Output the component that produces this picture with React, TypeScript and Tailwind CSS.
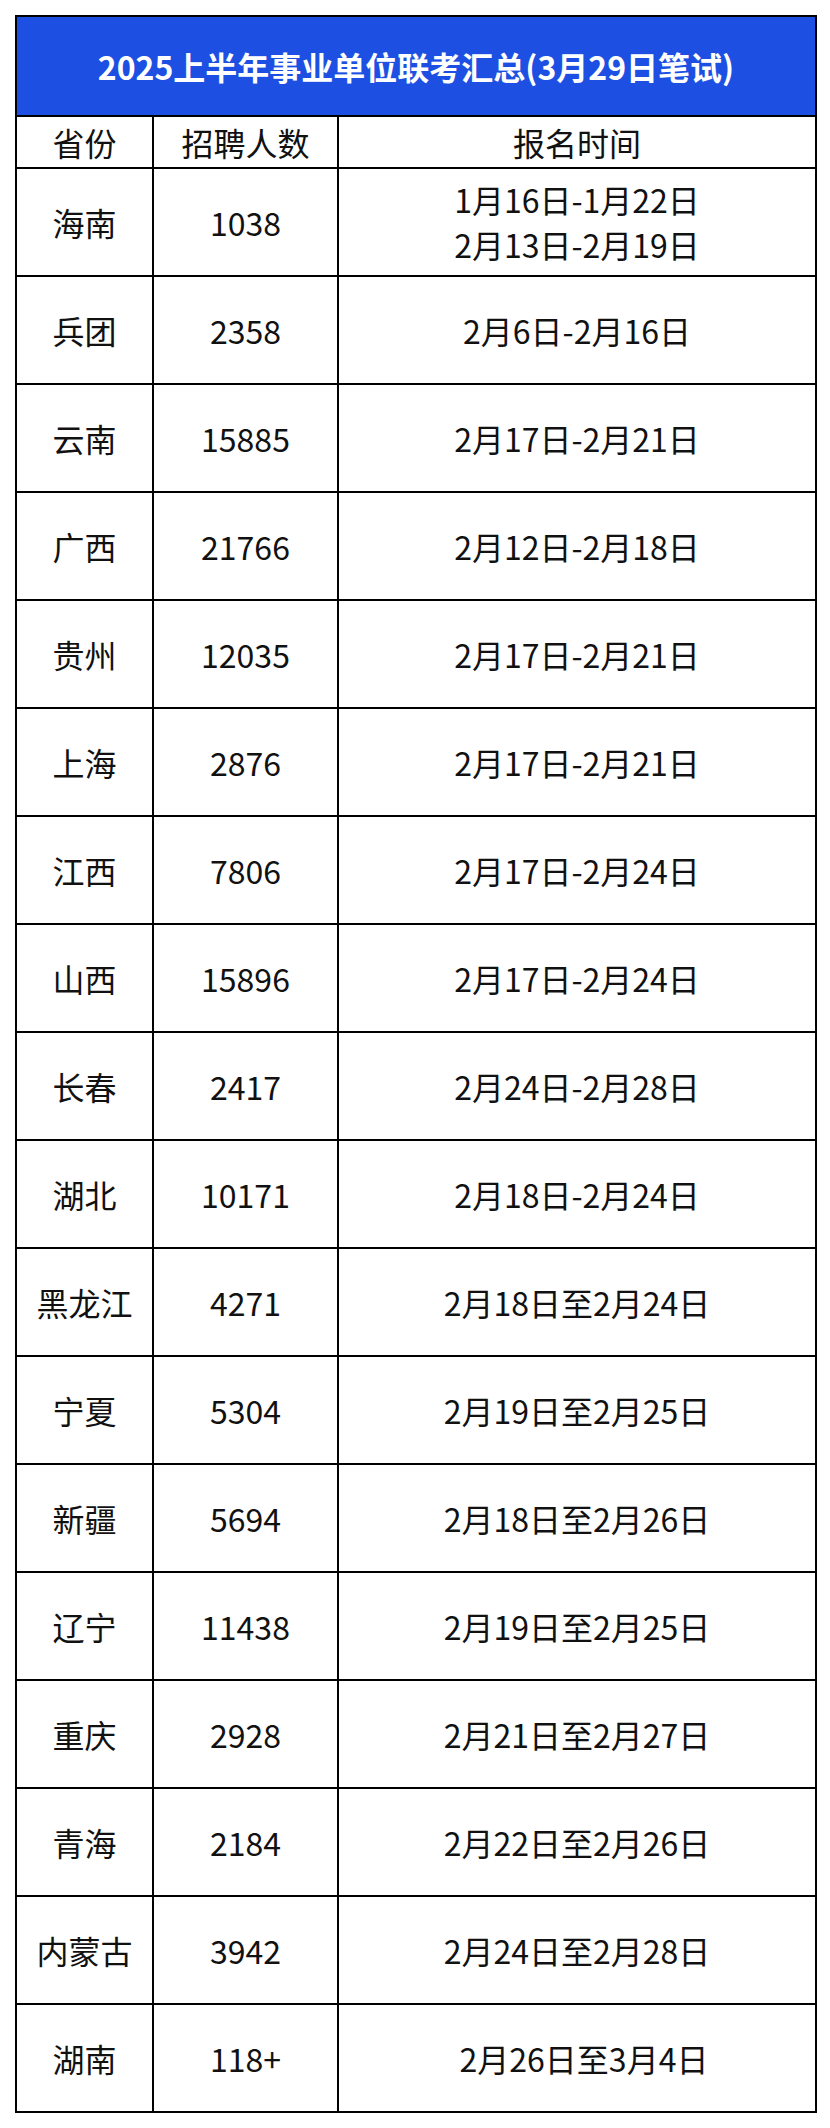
import React from "react";

const rows: { p: string; n: string; t: string[]; shift?: boolean }[] = [
  { p: "海南", n: "1038", t: ["1月16日-1月22日", "2月13日-2月19日"] },
  { p: "兵团", n: "2358", t: ["2月6日-2月16日"] },
  { p: "云南", n: "15885", t: ["2月17日-2月21日"] },
  { p: "广西", n: "21766", t: ["2月12日-2月18日"] },
  { p: "贵州", n: "12035", t: ["2月17日-2月21日"] },
  { p: "上海", n: "2876", t: ["2月17日-2月21日"] },
  { p: "江西", n: "7806", t: ["2月17日-2月24日"] },
  { p: "山西", n: "15896", t: ["2月17日-2月24日"] },
  { p: "长春", n: "2417", t: ["2月24日-2月28日"] },
  { p: "湖北", n: "10171", t: ["2月18日-2月24日"] },
  { p: "黑龙江", n: "4271", t: ["2月18日至2月24日"] },
  { p: "宁夏", n: "5304", t: ["2月19日至2月25日"] },
  { p: "新疆", n: "5694", t: ["2月18日至2月26日"] },
  { p: "辽宁", n: "11438", t: ["2月19日至2月25日"] },
  { p: "重庆", n: "2928", t: ["2月21日至2月27日"] },
  { p: "青海", n: "2184", t: ["2月22日至2月26日"] },
  { p: "内蒙古", n: "3942", t: ["2月24日至2月28日"] },
  { p: "湖南", n: "118+", t: ["2月26日至3月4日"], shift: true },
];

export default function App() {
  return (
    <div
      className="min-h-[2128px] w-[830px] bg-white pt-[15px] text-[#111]"
      style={{ fontFamily: '"Noto Sans CJK SC", "Noto Sans", sans-serif' }}
    >
      <div className="ml-[15px] w-[802px] border-2 border-black">
        <div className="flex h-[98px] items-center justify-center bg-[#1d50e2] text-[32px] font-bold text-white">
          2025上半年事业单位联考汇总(3月29日笔试)
        </div>
        <div className="grid h-[52px] grid-cols-[135px_185px_1fr] border-t-2 border-black text-[32px] leading-none">
          <div className="flex items-center justify-center">省份</div>
          <div className="flex items-center justify-center border-l-2 border-black">招聘人数</div>
          <div className="flex items-center justify-center border-l-2 border-black">报名时间</div>
        </div>
        {rows.map((r) => (
          <div
            key={r.p}
            className="grid h-[108px] grid-cols-[135px_185px_1fr] border-t-2 border-black text-[32px]"
          >
            <div className="flex items-center justify-center leading-none">{r.p}</div>
            <div className="flex items-center justify-center border-l-2 border-black leading-none">{r.n}</div>
            <div
              className={
                r.shift
                  ? "flex flex-col items-center justify-center border-l-2 border-black pl-[14px] leading-[45px]"
                  : "flex flex-col items-center justify-center border-l-2 border-black leading-[45px]"
              }
            >
              {r.t.map((x) => (
                <div key={x}>{x}</div>
              ))}
            </div>
          </div>
        ))}
      </div>
    </div>
  );
}
